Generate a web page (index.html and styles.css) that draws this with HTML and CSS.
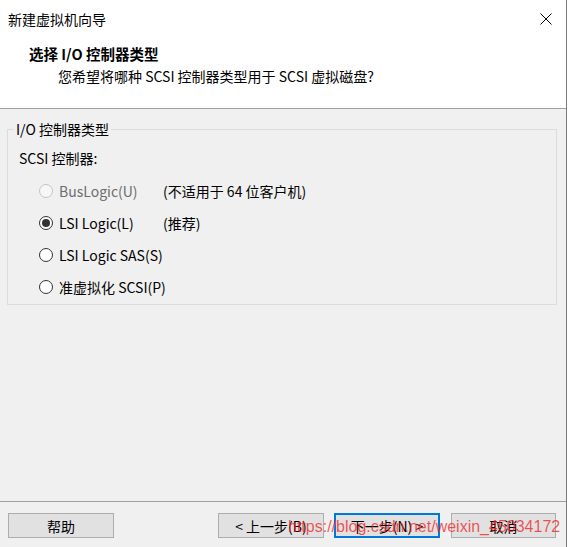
FILE: index.html
```html
<!DOCTYPE html>
<html lang="zh-CN">
<head>
<meta charset="utf-8">
<title>新建虚拟机向导</title>
<link rel="stylesheet" href="styles.css">
</head>
<body>
<div class="window">
  <div class="titlebar">
    <span class="title">新建虚拟机向导</span>
    <svg class="close" width="12" height="12" viewBox="0 0 12 12"><path d="M0.5 0.5 L11.5 11.5 M11.5 0.5 L0.5 11.5" stroke="#000" stroke-width="1" fill="none"/></svg>
  </div>
  <div class="header">
    <div class="h-title">选择 I/O 控制器类型</div>
    <div class="h-sub">您希望将哪种 SCSI 控制器类型用于 SCSI 虚拟磁盘?</div>
  </div>
  <div class="content">
    <fieldset class="group">
      <legend class="legend">I/O 控制器类型</legend>
      <div class="label">SCSI 控制器:</div>
      <div class="row disabled"><span class="radio"></span><span class="opt">BusLogic(U)</span><span class="note">(不适用于 64 位客户机)</span></div>
      <div class="row"><span class="radio checked"></span><span class="opt">LSI Logic(L)</span><span class="note">(推荐)</span></div>
      <div class="row"><span class="radio"></span><span class="opt">LSI Logic SAS(S)</span></div>
      <div class="row"><span class="radio"></span><span class="opt">准虚拟化 SCSI(P)</span></div>
    </fieldset>
  </div>
  <div class="footer">
    <div class="btn">帮助</div>
    <div class="spacer"></div>
    <div class="btn">&lt; 上一步(B)</div>
    <div class="btn primary">下一步(N) &gt;</div>
    <div class="btn cancel">取消</div>
    <div class="watermark">https://blog.csdn.net/weixin_45034172</div>
  </div>
</div>
</body>
</html>
```
FILE: styles.css
```css
html, body {
  margin: 0;
  padding: 0;
  background: #ffffff;
}
body {
  font-family: "Noto Sans CJK SC", "Noto Sans", sans-serif;
  font-size: 14px;
  color: #000;
}
.window {
  width: 567px;
  height: 547px;
  box-sizing: border-box;
  border-right: 1px solid #7a7a7a;
  display: flex;
  flex-direction: column;
  background: #f0f0f0;
}
.titlebar {
  height: 37px;
  background: #fff;
  display: flex;
  align-items: center;
  justify-content: space-between;
  padding: 0 14px 0 8px;
}
.title {
  font-size: 14px;
  line-height: 18px;
  margin-top: 1px;
}
.close {
  display: block;
}
.header {
  background: #fff;
  border-bottom: 1px solid #a0a0a0;
  box-sizing: border-box;
  height: 72px;
  padding: 8px 0 0 29px;
}
.h-title {
  font-weight: bold;
  font-size: 14.5px;
  line-height: 18px;
}
.h-sub {
  line-height: 20px;
  margin-top: 3px;
  padding-left: 29px;
}
.content {
  flex: 1;
  padding-top: 11px;
}
.group {
  margin: 0 0 0 7px;
  width: 550px;
  height: 185px;
  box-sizing: border-box;
  border: 1px solid #dcdcdc;
  padding: 10px 0 0 0;
}
.legend {
  margin-left: 6px;
  padding: 0 2px;
  line-height: 18px;
}
.label {
  line-height: 20px;
  padding-left: 11px;
  margin-bottom: 7px;
}
.row {
  height: 32px;
  display: flex;
  align-items: center;
  padding-left: 31px;
  white-space: nowrap;
}
.radio {
  width: 14px;
  height: 14px;
  box-sizing: border-box;
  border: 1px solid #333;
  border-radius: 50%;
  background: #fff;
  display: flex;
  align-items: center;
  justify-content: center;
  flex: none;
}
.radio.checked::after {
  content: "";
  width: 8px;
  height: 8px;
  border-radius: 50%;
  background: #333;
}
.disabled .radio {
  border-color: #c4c4c4;
  background: #f7f7f7;
}
.disabled .opt {
  color: #6d6d6d;
}
.opt {
  margin-left: 6px;
  min-width: 104px;
  line-height: 20px;
  flex: none;
}
.note {
  line-height: 20px;
}
.footer {
  height: 46px;
  border-top: 1px solid #a0a0a0;
  display: flex;
  align-items: flex-start;
  padding: 11px 10px 0 8px;
  box-sizing: border-box;
  position: relative;
}
.spacer {
  flex: 1;
}
.btn {
  width: 106px;
  height: 25px;
  box-sizing: border-box;
  background: #e1e1e1;
  border: 1px solid #adadad;
  display: flex;
  align-items: center;
  justify-content: center;
  white-space: nowrap;
}
.btn.primary {
  border: 2px solid #0078d7;
  margin-left: 10px;
}
.btn.cancel {
  margin-left: 11px;
  width: 105px;
}
.watermark {
  position: absolute;
  left: 288px;
  top: 15px;
  font-family: "Liberation Sans", Arial, sans-serif;
  font-size: 16px;
  line-height: 20px;
  color: rgba(240, 30, 30, 0.75);
  white-space: nowrap;
  pointer-events: none;
}
```
